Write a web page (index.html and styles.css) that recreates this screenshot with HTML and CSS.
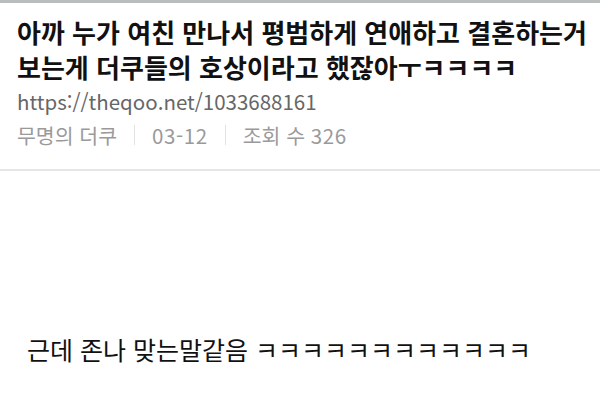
FILE: index.html
```html
<!DOCTYPE html>
<html lang="ko">
<head>
<meta charset="utf-8">
<link rel="stylesheet" href="styles.css">
</head>
<body>
<div class="topbar"></div>
<header class="head">
  <h1 class="title">아까 누가 여친 만나서 평범하게 연애하고 결혼하는거 보는게 더쿠들의 호상이라고 했잖아ㅜㅋㅋㅋㅋ</h1>
  <div class="url">https://theqoo.net/1033688161</div>
  <div class="meta">
    <span>무명의 더쿠</span>
    <span class="sep"></span>
    <span class="num">03-12</span>
    <span class="sep"></span>
    <span>조회 수 <span class="num">326</span></span>
  </div>
</header>
<div class="divider"></div>
<main class="content">
  <p class="body-text">근데 존나 맞는말같음 ㅋㅋㅋㅋㅋㅋㅋㅋㅋㅋㅋㅋ</p>
</main>
</body>
</html>
```

FILE: styles.css
```css
html, body {
  margin: 0;
  padding: 0;
  background: #fff;
}
body {
  font-family: "Noto Sans CJK KR", "Noto Sans", sans-serif;
  color: #111;
  width: 600px;
  height: 401px;
  overflow: hidden;
}
.topbar {
  height: 3px;
  background: #b9bdbd;
}
.head {
  padding: 11px 8px 0 17px;
}
.title {
  margin: 0;
  font-size: 26px;
  font-weight: 700;
  line-height: 35px;
  color: #111;
  word-break: keep-all;
}
.url {
  margin-top: 3px;
  font-size: 20.5px;
  line-height: 28px;
  color: #666;
}
.meta {
  display: flex;
  align-items: center;
  gap: 17px;
  margin-top: 6px;
  font-size: 20.5px;
  line-height: 28px;
  color: #9a9a9a;
}
.num {
  letter-spacing: 0.6px;
}
.sep {
  width: 1px;
  height: 20px;
  background: #e2e2e2;
}
.divider {
  margin-top: 20px;
  height: 2px;
  background: #e6e6e6;
}
.content {
  padding: 162px 27px 0 27px;
}
.body-text {
  margin: 0;
  font-size: 25px;
  line-height: 32px;
  color: #111;
  word-break: keep-all;
}
```
